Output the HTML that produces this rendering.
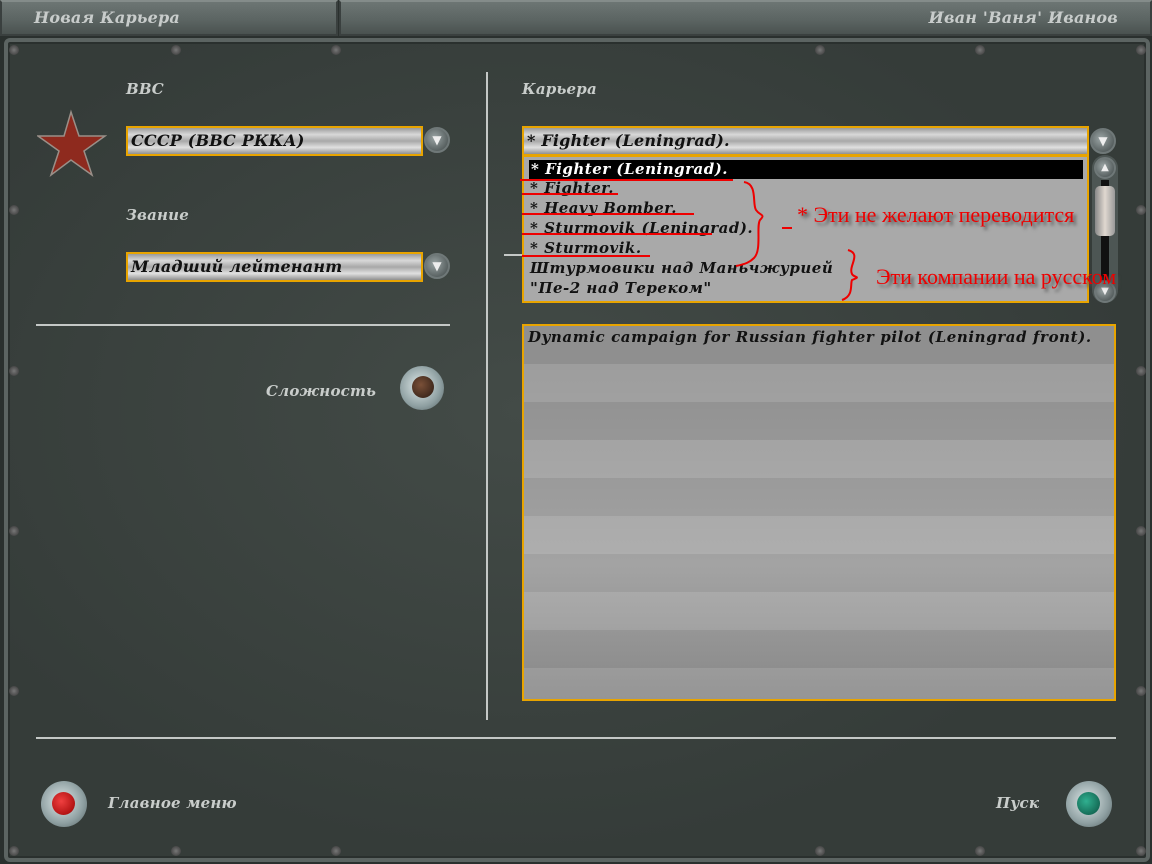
<!DOCTYPE html>
<html><head><meta charset="utf-8"><style>
*{margin:0;padding:0;box-sizing:border-box}
body{width:1152px;height:864px;overflow:hidden;background:#2a302e;position:relative;font-family:"DejaVu Serif","Liberation Serif",serif;font-weight:bold;font-style:italic;letter-spacing:0.2px}
.a{position:absolute;white-space:nowrap}
.top{top:0;height:36px;background:linear-gradient(#6d7674,#5a6361 60%,#4a5250);border:2px solid #3a403f;border-top-color:#848c8a;color:#c8cccb;font-size:16px;line-height:32px}
.panel{left:4px;top:38px;width:1146px;height:824px;background:radial-gradient(ellipse at 45% 45%,#434b47,#353c39 70%);border:4px solid #5c6462;border-radius:6px;box-shadow:inset 0 0 0 2px #2a302e}
.lbl{color:#c9cdcb;font-size:15px}
.combo{height:30px;border:2px solid #e8a400;background:linear-gradient(#9a9a9a,#d8d8d8 25%,#a8a8a8 50%,#e0e0e0 75%,#909090);color:#111;font-size:16px;line-height:26px;padding-left:3px}
.btn{width:26px;height:26px;border-radius:50%;background:radial-gradient(circle at 40% 40%,#9aa4a4,#3e4646);border:2px solid #6f7878;color:#eee;font-size:12px;text-align:center;line-height:22px;font-style:normal;letter-spacing:0}
.line{background:#c4c8c6}
.screw{width:10px;height:10px;border-radius:50%;background:radial-gradient(#777,#333);}
.list{left:522px;top:155px;width:567px;height:148px;background:#a9a9a9;border:2px solid #e8a400;font-size:15px;color:#111;letter-spacing:0.5px}
.list div{position:absolute;left:6px;line-height:18px}
.red{color:#e00;font-style:normal;font-weight:normal;font-family:"Liberation Serif",serif;font-size:22px;letter-spacing:0;text-shadow:3px 3px 3px #555}
.knob{border-radius:50%;background:radial-gradient(circle at 45% 45%,#e0eaea,#8fa0a2 60%,#4f5c5e)}
</style></head><body>
<div class="a top" style="left:0;width:338px;padding-left:32px">Новая Карьера</div>
<div class="a top" style="left:339px;width:813px;text-align:right;padding-right:32px">Иван 'Ваня' Иванов</div>
<div class="a panel"></div>
<div class="a screw" style="left:9px;top:45px"></div><div class="a screw" style="left:171px;top:45px"></div><div class="a screw" style="left:331px;top:45px"></div>
<div class="a screw" style="left:815px;top:45px"></div><div class="a screw" style="left:975px;top:45px"></div><div class="a screw" style="left:1136px;top:45px"></div>
<div class="a screw" style="left:9px;top:205px"></div><div class="a screw" style="left:9px;top:366px"></div><div class="a screw" style="left:9px;top:526px"></div><div class="a screw" style="left:9px;top:686px"></div><div class="a screw" style="left:9px;top:846px"></div>
<div class="a screw" style="left:1136px;top:205px"></div><div class="a screw" style="left:1136px;top:366px"></div><div class="a screw" style="left:1136px;top:526px"></div><div class="a screw" style="left:1136px;top:686px"></div><div class="a screw" style="left:1136px;top:846px"></div>
<div class="a screw" style="left:171px;top:846px"></div><div class="a screw" style="left:331px;top:846px"></div><div class="a screw" style="left:815px;top:846px"></div><div class="a screw" style="left:975px;top:846px"></div>

<div class="a lbl" style="left:126px;top:80px">ВВС</div>
<svg class="a" style="left:37px;top:109px" width="70" height="68" viewBox="0 0 70 68"><polygon points="34,3 42,27 68,27 47,42 55,66 34,51 14,66 22,42 1,27 27,27" fill="#8e2a1e" stroke="#9a8f88" stroke-width="1.5"/></svg>
<div class="a combo" style="left:126px;top:126px;width:297px">СССР (ВВС РККА)</div>
<div class="a btn" style="left:424px;top:127px">▼</div>
<div class="a lbl" style="left:126px;top:206px">Звание</div>
<div class="a combo" style="left:126px;top:252px;width:297px">Младший лейтенант</div>
<div class="a btn" style="left:424px;top:253px">▼</div>
<div class="a line" style="left:36px;top:324px;width:414px;height:2px"></div>
<div class="a lbl" style="left:266px;top:382px">Сложность</div>
<div class="a knob" style="left:400px;top:366px;width:44px;height:44px"><div class="a" style="left:12px;top:10px;width:22px;height:22px;border-radius:50%;background:radial-gradient(circle at 40% 40%,#7a5038,#2a1a12)"></div></div>

<div class="a line" style="left:486px;top:72px;width:2px;height:648px"></div>
<div class="a line" style="left:504px;top:254px;width:18px;height:2px"></div>
<div class="a lbl" style="left:522px;top:80px">Карьера</div>
<div class="a combo" style="left:522px;top:126px;width:567px">* Fighter (Leningrad).</div>
<div class="a btn" style="left:1090px;top:128px">▼</div>
<div class="a list">
<div style="left:5px;top:3px;width:554px;height:19px;background:#000;color:#fff;padding-left:2px;line-height:19px">* Fighter (Leningrad).</div>
<div style="top:22px">* Fighter.</div>
<div style="top:42px">* Heavy Bomber.</div>
<div style="top:62px">* Sturmovik (Leningrad).</div>
<div style="top:82px">* Sturmovik.</div>
<div style="top:102px">Штурмовики над Маньчжурией</div>
<div style="top:122px">"Пе-2 над Тереком"</div>
</div>
<div class="a" style="left:1092px;top:155px;width:26px;height:148px;border-radius:13px;background:#4d5654"></div>
<div class="a btn" style="left:1094px;top:157px;width:22px;height:22px;line-height:18px;font-size:10px">▲</div>
<div class="a" style="left:1101px;top:180px;width:8px;height:100px;background:#111"></div>
<div class="a" style="left:1095px;top:186px;width:20px;height:50px;border-radius:5px;background:linear-gradient(90deg,#888,#e0d8d0,#999)"></div>
<div class="a btn" style="left:1094px;top:281px;width:22px;height:22px;line-height:18px;font-size:10px">▼</div>
<svg class="a" style="left:520px;top:170px" width="350" height="135"><g stroke="#e00" stroke-width="2" fill="none">
<path d="M0,10 H213"/><path d="M2,24 H98"/><path d="M2,44 H174"/><path d="M2,64 H192"/><path d="M2,86 H130"/>
<path d="M224,12 C238,14 232,34 236,40 C240,46 246,44 240,50 C236,56 242,80 234,88 C230,92 226,94 216,96"/>
<path d="M328,80 C342,84 328,96 332,104 C334,108 342,106 332,110 C330,114 334,126 322,130"/>
<path d="M262,58 H272"/></g></svg>
<div class="a red" style="left:797px;top:202px">* Эти не желают переводится</div>
<div class="a red" style="left:876px;top:264px">Эти компании на русском</div>
<div class="a" style="left:522px;top:324px;width:594px;height:377px;border:2px solid #e8a400;background:repeating-linear-gradient(#8f8f8f 0,#8f8f8f 38px,#9d9d9d 38px,#9d9d9d 76px);font-size:15px;color:#111;padding:2px 4px;letter-spacing:0.6px">
<div style="position:absolute;left:0;right:0;top:38px;bottom:0;background:linear-gradient(rgba(0,0,0,0),rgba(255,255,255,.18) 60%,rgba(0,0,0,.05))"></div>
<span style="position:relative">Dynamic campaign for Russian fighter pilot (Leningrad front).</span></div>

<div class="a line" style="left:36px;top:737px;width:1080px;height:2px"></div>
<div class="a knob" style="left:41px;top:781px;width:46px;height:46px"><div class="a" style="left:11px;top:11px;width:23px;height:23px;border-radius:50%;background:radial-gradient(circle at 40% 40%,#f04040,#900)"></div></div>
<div class="a lbl" style="left:108px;top:794px">Главное меню</div>
<div class="a lbl" style="left:996px;top:794px">Пуск</div>
<div class="a knob" style="left:1066px;top:781px;width:46px;height:46px"><div class="a" style="left:11px;top:11px;width:23px;height:23px;border-radius:50%;background:radial-gradient(circle at 40% 40%,#30b090,#0a5040)"></div></div>
</body></html>
